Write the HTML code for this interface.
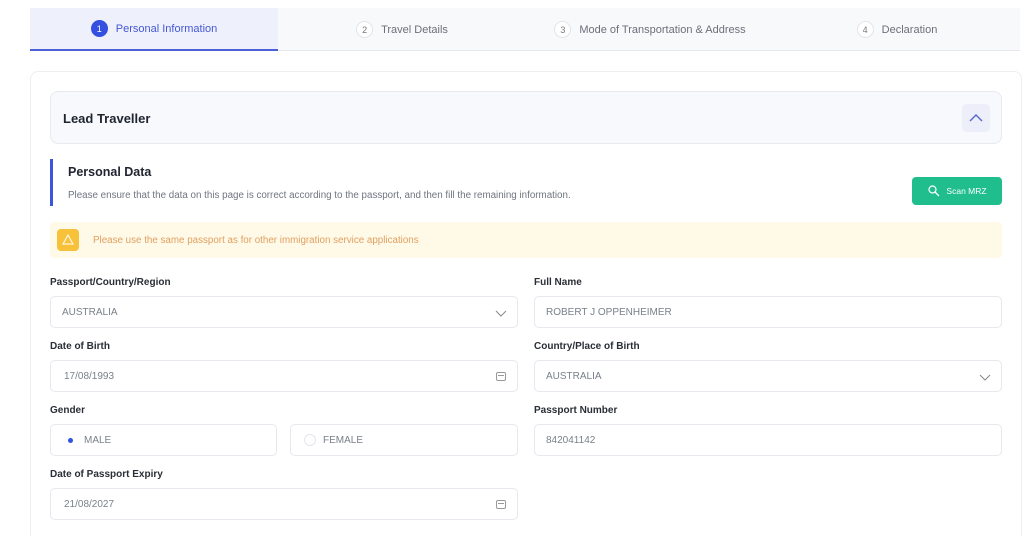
<!DOCTYPE html>
<html style="width:1024px;height:536px;overflow:hidden"><head><meta charset="utf-8"><style>
*{box-sizing:border-box;margin:0;padding:0}
body{width:1024px;height:536px;background:#fff;font-family:"Liberation Sans",sans-serif;position:relative;overflow:hidden;color:#1f2430}
.abs{position:absolute}
.tabs{left:30px;top:8px;width:990px;height:43px;background:#f8f9fb;border-bottom:1px solid #e6e8ee}
.tab{position:absolute;top:0;height:43px;display:flex;align-items:center;justify-content:center;font-size:11px;color:#6a6f7a}
.num{width:17px;height:17px;border-radius:50%;border:1px solid #e3e5ea;background:#fff;font-size:9px;display:flex;align-items:center;justify-content:center;margin-right:8px;color:#777}
.card{left:30px;top:71px;width:992px;height:480px;border:1px solid #eceef2;border-radius:8px}
.lead{left:50px;top:91px;width:952px;height:53px;background:#f8f9fc;border:1px solid #e8eaf0;border-radius:8px}
.lbl{font-size:10px;color:#2a2e36;font-weight:bold}
.inp{height:32px;border:1px solid #e6e8ed;border-radius:5px;font-size:10px;color:#7a808a;display:flex;align-items:center;padding-left:11px}
.cal{position:absolute;right:11px;top:11px;width:10px;height:9px;border:1px solid #999;border-radius:2px}
.cal:after{content:"";position:absolute;left:1px;right:1px;top:2px;border-top:1px solid #999}
</style></head><body>
<div class="abs tabs">
 <div class="tab" style="left:0;width:248px;background:#eef1fb;border-bottom:2px solid #4a5fd8;color:#4457d6"><div class="num" style="background:#3450e0;border-color:#3450e0;color:#fff">1</div>Personal Information</div>
 <div class="tab" style="left:248px;width:248px"><div class="num">2</div>Travel Details</div>
 <div class="tab" style="left:496px;width:248px"><div class="num">3</div>Mode of Transportation &amp; Address</div>
 <div class="tab" style="left:744px;width:246px"><div class="num">4</div>Declaration</div>
</div>
<div class="abs card"></div>
<div class="abs lead"><div class="abs" style="left:12px;top:19px;font-size:13px;font-weight:bold;color:#1f2430">Lead Traveller</div>
 <div class="abs" style="left:911px;top:12px;width:28px;height:28px;background:#eceefa;border-radius:5px"><svg width="28" height="28"><path d="M8 17 L14 11 L20 17" fill="none" stroke="#5566cc" stroke-width="1.4"/></svg></div></div>
<div class="abs" style="left:50px;top:159px;width:3px;height:47px;background:#3b55e0"></div>
<div class="abs" style="left:68px;top:165px;font-size:12.5px;font-weight:bold;color:#1f2430">Personal Data</div>
<div class="abs" style="left:68px;top:190px;font-size:9.8px;color:#6f7580">Please ensure that the data on this page is correct according to the passport, and then fill the remaining information.</div>
<div class="abs" style="left:912px;top:177px;width:90px;height:28px;background:#1fbe8c;border-radius:4px;color:#fff;font-size:8.5px;display:flex;align-items:center;justify-content:center"><svg width="14" height="14" style="margin-right:5px"><circle cx="5.5" cy="5.5" r="3.5" fill="none" stroke="#fff" stroke-width="1.2"/><path d="M8 8 L12 12" stroke="#fff" stroke-width="1.3"/></svg>Scan MRZ</div>
<div class="abs" style="left:50px;top:222px;width:952px;height:36px;background:#fff9e8;border-radius:4px"></div>
<div class="abs" style="left:57px;top:229px;width:22px;height:22px;background:#f8c13a;border-radius:4px"><svg width="22" height="22"><path d="M11 6 L16 15 L6 15 Z" fill="none" stroke="#fff" stroke-width="1"/></svg></div>
<div class="abs" style="left:93px;top:235px;font-size:9.8px;color:#e0a060">Please use the same passport as for other immigration service applications</div>

<div class="abs lbl" style="left:50px;top:277px">Passport/Country/Region</div>
<div class="abs inp" style="left:50px;top:296px;width:468px">AUSTRALIA<svg class="abs" style="right:10px;top:11px" width="12" height="10"><path d="M1 3 L6 8 L11 3" fill="none" stroke="#888" stroke-width="1"/></svg></div>
<div class="abs lbl" style="left:534px;top:277px">Full Name</div>
<div class="abs inp" style="left:534px;top:296px;width:468px">ROBERT J OPPENHEIMER</div>

<div class="abs lbl" style="left:50px;top:341px">Date of Birth</div>
<div class="abs inp" style="left:50px;top:360px;width:468px;padding-left:13px">17/08/1993<div class="cal"></div></div>
<div class="abs lbl" style="left:534px;top:341px">Country/Place of Birth</div>
<div class="abs inp" style="left:534px;top:360px;width:468px">AUSTRALIA<svg class="abs" style="right:10px;top:11px" width="12" height="10"><path d="M1 3 L6 8 L11 3" fill="none" stroke="#888" stroke-width="1"/></svg></div>

<div class="abs lbl" style="left:50px;top:405px">Gender</div>
<div class="abs inp" style="left:50px;top:424px;width:227px;padding-left:14px"><span style="width:10px;height:10px;border-radius:50%;background:#fff;display:inline-flex;align-items:center;justify-content:center;margin-right:9px"><span style="width:5px;height:5px;border-radius:50%;background:#3450e0"></span></span>MALE</div>
<div class="abs inp" style="left:290px;top:424px;width:228px;padding-left:13px"><span style="width:12px;height:12px;border-radius:50%;border:1px solid #e3e5ea;margin-right:7px"></span>FEMALE</div>
<div class="abs lbl" style="left:534px;top:405px">Passport Number</div>
<div class="abs inp" style="left:534px;top:424px;width:468px">842041142</div>

<div class="abs lbl" style="left:50px;top:469px">Date of Passport Expiry</div>
<div class="abs inp" style="left:50px;top:488px;width:468px;padding-left:13px">21/08/2027<div class="cal"></div></div>
</body></html>
